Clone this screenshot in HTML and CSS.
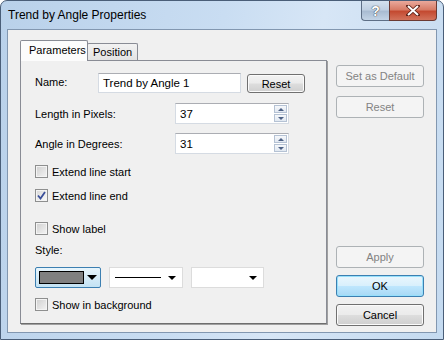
FILE: index.html
```html
<!DOCTYPE html>
<html lang="en">
<head>
    <meta charset="UTF-8">
    <title>Trend by Angle Properties</title>
    <link rel="stylesheet" href="styles.css">
</head>
<body>
    <div class="window">
        <div class="titlebar">
            <span class="title">Trend by Angle Properties</span>
            <div class="caption-btns">
                <div class="cap help">?</div>
                <div class="cap close">
                    <svg width="14" height="11" viewBox="0 0 14 11">
                        <path d="M2 1 L12 10 M12 1 L2 10" stroke="#5a2016" stroke-width="3.6" stroke-linecap="square"/>
                        <path d="M2 1 L12 10 M12 1 L2 10" stroke="#fff" stroke-width="2"/>
                    </svg>
                </div>
            </div>
        </div>
        <div class="client">
            <div class="tabs">
                <div class="tabstrip">
                    <div class="tab active">Parameters</div>
                    <div class="tab">Position</div>
                </div>
                <div class="panel">
                    <div class="row name-row">
                        <span class="label">Name:</span>
                        <div class="field name-field">Trend by Angle 1</div>
                        <div class="btn small">Reset</div>
                    </div>
                    <div class="row spin-row first">
                        <span class="label">Length in Pixels:</span>
                        <div class="field spin-field">37
                            <div class="spinner"><span class="up"></span><span class="down"></span></div>
                        </div>
                    </div>
                    <div class="row spin-row">
                        <span class="label">Angle in Degrees:</span>
                        <div class="field spin-field">31
                            <div class="spinner"><span class="up"></span><span class="down"></span></div>
                        </div>
                    </div>
                    <div class="check cb-start"><span class="box"></span>Extend line start</div>
                    <div class="check cb-end"><span class="box checked">
                        <svg width="9" height="9" viewBox="0 0 9 9"><path d="M1 4.5 L3.5 7.5 L8 1" fill="none" stroke="#3a4f9a" stroke-width="1.8"/></svg>
                    </span>Extend line end</div>
                    <div class="check cb-label"><span class="box"></span>Show label</div>
                    <div class="style-label">Style:</div>
                    <div class="combos">
                        <div class="combo color-combo">
                            <span class="swatch"></span>
                            <span class="arrow"></span>
                        </div>
                        <div class="combo line-combo">
                            <span class="line"></span>
                            <span class="arrow"></span>
                        </div>
                        <div class="combo width-combo">
                            <span class="arrow"></span>
                        </div>
                    </div>
                    <div class="check cb-bg"><span class="box"></span>Show in background</div>
                </div>
            </div>
            <div class="side">
                <div class="btn disabled">Set as Default</div>
                <div class="btn disabled">Reset</div>
                <div class="spacer"></div>
                <div class="btn disabled">Apply</div>
                <div class="btn default">OK</div>
                <div class="btn">Cancel</div>
            </div>
        </div>
    </div>
</body>
</html>
```

FILE: styles.css
```css
html, body {
    margin: 0;
    padding: 0;
}
body {
    width: 444px;
    height: 340px;
    overflow: hidden;
    background: #fff;
    font-family: "Liberation Sans", Arial, sans-serif;
    font-size: 11px;
    color: #000;
}
.window {
    box-sizing: border-box;
    width: 444px;
    height: 340px;
    border: 1px solid #4a5e78;
    border-radius: 7px 7px 0 0;
    background: linear-gradient(100deg, #b9d1ea 0%, #c9ddf2 45%, #d7e6f6 65%, #c4daf0 100%);
    display: flex;
    flex-direction: column;
}
.titlebar {
    height: 28px;
    display: flex;
    align-items: flex-start;
    justify-content: space-between;
}
.title {
    font-size: 12px;
    color: #000;
    margin: 7px 0 0 7px;
}
.caption-btns {
    display: flex;
    margin-right: 6px;
}
.cap {
    height: 19px;
    display: flex;
    align-items: center;
    justify-content: center;
    border: 1px solid #5e6f86;
    border-top: none;
}
.cap.help {
    width: 27px;
    border-radius: 0 0 0 4px;
    border-right: none;
    background: linear-gradient(#d4e1ee 0%, #c0d0e2 45%, #a9bcd2 55%, #c3d4e6 100%);
    color: #fff;
    font-weight: bold;
    font-size: 14px;
    text-shadow: 0 0 1px #333, 0 0 1px #333;
}
.cap.close {
    width: 46px;
    border-radius: 0 0 4px 0;
    background: linear-gradient(#e9a99c 0%, #d77c67 45%, #c44a31 55%, #d2735c 100%);
    border-color: #6b3a33;
}
.client {
    flex: 1;
    margin: 0 6px 6px 6px;
    box-sizing: border-box;
    border: 1px solid #8297b0;
    background: #f0f0f0;
    display: flex;
    padding: 10px 12px 8px 12px;
}
.tabs {
    width: 307px;
    display: flex;
    flex-direction: column;
}
.tabstrip {
    display: flex;
    align-items: flex-end;
    height: 20px;
    position: relative;
    z-index: 1;
}
.tab {
    box-sizing: border-box;
    height: 17px;
    padding: 2px 5px 0 5px;
    border: 1px solid #898c95;
    border-bottom: none;
    border-radius: 2px 2px 0 0;
    background: linear-gradient(#f2f2f2, #e3e3e3);
    margin-left: -1px;
}
.tab.active {
    height: 21px;
    margin-bottom: -1px;
    background: #fcfcfc;
    margin-left: 0;
    padding: 3px 8px 0 8px;
    width: 68px;
}
.panel {
    flex: 1;
    box-sizing: border-box;
    border: 1px solid #898c95;
    border-bottom-color: #6e6e6e;
    background: #f0f0f0;
    padding: 0 0 0 14px;
    box-shadow: 1px 1px 0 #a0a0a0;
}
.row {
    display: flex;
    align-items: center;
}
.name-row {
    margin-top: 12px;
}
.name-row .label {
    width: 63px;
    margin-top: -2px;
}
.field {
    box-sizing: border-box;
    background: #fff;
    border: 1px solid #d5dbe3;
    border-top-color: #abadb3;
    padding: 0 4px;
    display: flex;
    align-items: center;
    font-size: 11.5px;
}
.name-field {
    width: 143px;
    height: 20px;
}
.btn {
    box-sizing: border-box;
    height: 21px;
    border: 1px solid #707070;
    border-radius: 3px;
    background: linear-gradient(#f2f2f2 0%, #ebebeb 48%, #dddddd 52%, #cfcfcf 100%);
    box-shadow: inset 0 0 0 1px #fbfbfb;
    display: flex;
    align-items: center;
    justify-content: center;
    font-size: 11px;
}
.btn.small {
    width: 58px;
    height: 19px;
    margin-left: 6px;
    margin-top: 1px;
}
.spin-row {
    margin-top: 9px;
}
.spin-row.first {
    margin-top: 10px;
}
.spin-row .label {
    width: 140px;
}
.spin-field {
    width: 114px;
    height: 21px;
    position: relative;
}
.spinner {
    position: absolute;
    right: 1px;
    top: 1px;
    width: 13px;
    height: 17px;
    display: flex;
    flex-direction: column;
    gap: 1px;
}
.spinner span {
    flex: 1;
    border: 1px solid #b5c2d4;
    background: linear-gradient(#f6f8fb, #e1e8f1);
    position: relative;
}
.spinner span::after {
    content: "";
    position: absolute;
    left: 3px;
    top: 2px;
    width: 0;
    height: 0;
    border-left: 3px solid transparent;
    border-right: 3px solid transparent;
}
.spinner .up::after {
    border-bottom: 3px solid #4d6185;
}
.spinner .down::after {
    border-top: 3px solid #4d6185;
}
.check {
    display: flex;
    align-items: center;
    gap: 4px;
    height: 13px;
}
.box {
    box-sizing: border-box;
    width: 13px;
    height: 13px;
    border: 1px solid #8e8f8f;
    background: linear-gradient(135deg, #cfcfcf, #f4f4f4);
    box-shadow: inset 0 0 0 1px #f4f4f4;
    display: flex;
    align-items: center;
    justify-content: center;
}
.box.checked {
    background: linear-gradient(135deg, #d7d7d7, #fbfbfb);
}
.cb-start {
    margin-top: 11px;
}
.cb-end {
    margin-top: 11px;
}
.cb-label {
    margin-top: 20px;
}
.style-label {
    margin-top: 9px;
}
.combos {
    display: flex;
    margin-top: 11px;
    gap: 8px;
}
.combo {
    box-sizing: border-box;
    height: 21px;
    background: #fff;
    border: 1px solid #dcdcdc;
    display: flex;
    align-items: center;
    padding: 0 6px 0 5px;
}
.arrow {
    width: 0;
    height: 0;
    border-left: 4px solid transparent;
    border-right: 4px solid transparent;
    border-top: 4px solid #000;
    margin-left: auto;
}
.color-combo {
    width: 66px;
    border: 1px solid #3c7fb1;
    border-radius: 2px;
    background: linear-gradient(#e8f5fc, #c3e2f3);
    padding: 0 3px;
}
.swatch {
    width: 45px;
    height: 13px;
    box-sizing: border-box;
    border: 1px solid #000;
    background: #808080;
}
.color-combo .arrow {
    border-left-width: 5px;
    border-right-width: 5px;
    border-top-width: 5px;
}
.line-combo {
    width: 74px;
}
.line {
    width: 46px;
    height: 1px;
    background: #000;
}
.width-combo {
    width: 73px;
}
.cb-bg {
    margin-top: 10px;
}
.side {
    width: 88px;
    margin-left: 9px;
    margin-bottom: -2px;
    padding-top: 25px;
    display: flex;
    flex-direction: column;
    gap: 7px;
}
.side .btn {
    height: 22px;
}
.side .btn + .btn {
    margin-top: 2px;
}
.side .spacer + .btn,
.side .btn.default,
.side .btn.default + .btn {
    margin-top: 0;
}
.spacer {
    flex: 1;
}
.btn.disabled {
    border-color: #adb2b5;
    background: #f4f4f4;
    box-shadow: none;
    color: #838383;
}
.btn.default {
    border-color: #3c7fb1;
    background: linear-gradient(#eaf6fd 0%, #d9f0fc 48%, #bee6fd 52%, #a7d9f5 100%);
    box-shadow: inset 0 0 0 1px #97e0fb;
}
```
